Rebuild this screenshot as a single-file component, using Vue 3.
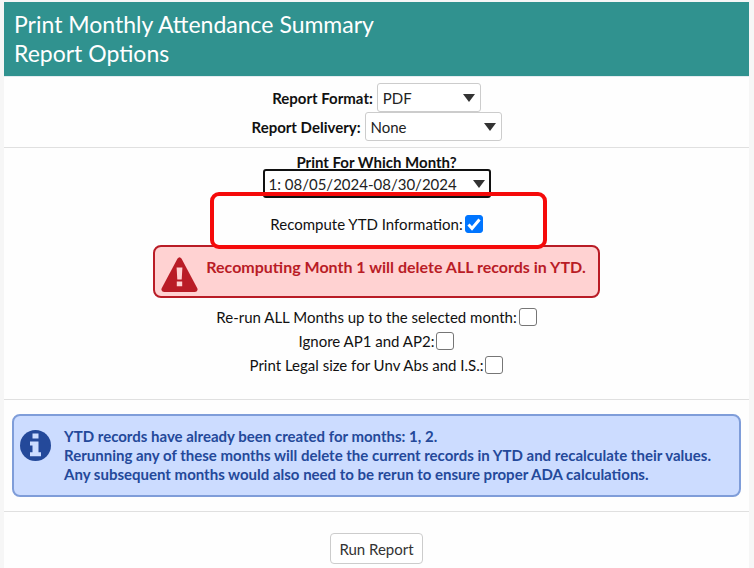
<script setup>
import { ref } from 'vue'

const format = ref('PDF')
const delivery = ref('None')
const month = ref('1: 08/05/2024-08/30/2024')
const recompute = ref(true)

const options = ref([
  { id: 'rerun', label: 'Re-run ALL Months up to the selected month:', checked: false },
  { id: 'ignore', label: 'Ignore AP1 and AP2:', checked: false },
  { id: 'legal', label: 'Print Legal size for Unv Abs and I.S.:', checked: false },
])
</script>

<template>
  <main class="panel">
    <header class="panel-header">
      <h1>Print Monthly Attendance Summary<br>Report Options</h1>
    </header>

    <section class="formats">
      <div class="field">
        <label for="format">Report Format:</label>
        <span class="select format">
          <select id="format" v-model="format">
            <option>PDF</option>
          </select>
        </span>
      </div>
      <div class="field">
        <label for="delivery">Report Delivery:</label>
        <span class="select delivery">
          <select id="delivery" v-model="delivery">
            <option>None</option>
          </select>
        </span>
      </div>
    </section>

    <section class="months">
      <label class="month-label" for="month">Print For Which Month?</label>
      <span class="select month">
        <select id="month" v-model="month">
          <option>1: 08/05/2024-08/30/2024</option>
        </select>
      </span>

      <div class="check recompute">
        <label for="recompute">Recompute YTD Information:</label>
        <input id="recompute" v-model="recompute" type="checkbox">
        <span class="highlight"></span>
      </div>

      <div class="alert danger">
        <svg class="icon-warning" viewBox="0 0 37 35" aria-hidden="true">
          <path fill="#b91c26" d="M16.4 1.8Q18.5-1.5 20.6 1.8L36.3 31.2Q37.4 34.5 34 35H3Q-.4 34.5.7 31.2Z" />
          <path fill="#ffd2d2" d="M15.6 10.5h5.8l-.7 12h-4.4zM15.8 24.5h5.4v4.7h-5.4z" />
        </svg>
        <p>Recomputing Month 1 will delete ALL records in YTD.</p>
      </div>

      <div class="checks">
        <div v-for="o in options" :key="o.id" class="check">
          <label :for="o.id">{{ o.label }}</label>
          <input :id="o.id" v-model="o.checked" type="checkbox">
        </div>
      </div>
    </section>

    <section class="notice">
      <div class="alert info">
        <svg class="icon-info" viewBox="0 0 31 31" aria-hidden="true">
          <circle cx="15.5" cy="15.5" r="15.5" fill="#24499a" />
          <path fill="#ccdcff" d="M12.5 3.500h6v5h-6zM10 11.500h8.500v10.700h2.500v4H10v-4h2.500v-6.700H10z" />
        </svg>
        <p>
          YTD records have already been created for months: 1, 2.<br>
          Rerunning any of these months will delete the current records in YTD and recalculate their values.<br>
          Any subsequent months would also need to be rerun to ensure proper ADA calculations.
        </p>
      </div>
    </section>

    <footer class="actions">
      <button type="button">Run Report</button>
    </footer>
  </main>
</template>

<style>
body{background:#f6f6f6}
</style>

<style scoped>
.panel{margin:2px 5px 0 4px;background:#fefefe;color:#111;font-family:Lato,"Liberation Sans",sans-serif;font-size:15px;line-height:20px}
.panel-header{background:#30928f;padding:8px 10px;border-bottom:1px solid #e4ecf0}
h1{margin:0;color:#fff;font-size:23px;line-height:29px;font-weight:400}
section{border-bottom:1px solid #e0e0e0}
.formats{padding:6px 0}
.field{display:flex;justify-content:center;align-items:center;gap:4px;font-weight:700}
.select{position:relative;display:block}
.select::after{content:"";position:absolute;right:6px;top:50%;margin-top:-4px;border:6px solid transparent;border-top:8px solid #333;border-bottom:0;pointer-events:none}
select{appearance:none;display:block;width:100%;height:29px;margin:0;padding:0 5px;border:1px solid #ccc;border-radius:3px;background:#fff;color:#222;font:inherit;font-weight:400}
.format{width:104px}
.delivery{width:137px}
.month{width:228px}
.month select{padding:0 4px;border:2px solid #111}
.months{display:flex;flex-direction:column;align-items:center;padding:4px 0 22px}
.month-label{height:17px;font-weight:700}
.check{display:flex;justify-content:center;align-items:center;gap:2px;height:24px}
.check input{appearance:none;width:18px;height:18px;margin:0;border:1px solid #767676;border-radius:3px;background:#fff}
.check input:checked{border-color:#0075ff;background:#0075ff url("data:image/svg+xml,%3Csvg xmlns='http://www.w3.org/2000/svg' viewBox='0 0 16 16'%3E%3Cpath d='M2.5 8.5l3.5 4 7.5-9' fill='none' stroke='white' stroke-width='3'/%3E%3C/svg%3E")}
.recompute{position:relative;margin:14px 0 9px}
/* red marker drawn over the neighbouring rows */
.highlight{position:absolute;inset:-20px -64px -13px -60px;border:4px solid #f50a0a;border-radius:9px;z-index:1;pointer-events:none}
.alert{display:flex;box-sizing:border-box;border:2px solid;border-radius:8px;font-weight:700}
.alert p{margin:0}
.alert svg{flex:none}
.danger{gap:8px;padding:10px 12px 4px 6px;border-color:#b91c26;background:#ffd2d2;color:#b91c26;font-size:16px}
.icon-warning{width:37px;height:35px}
.checks{margin-top:7px}
.notice{padding:14px 8px}
.info{gap:13px;padding:11px 6px;border-color:#7f9dd9;background:#ccdcff;color:#24499a;line-height:19px}
.icon-info{width:31px;height:31px;margin-top:3px}
.actions{display:flex;justify-content:center;padding:21px 0}
button{height:31px;padding:0 8px;border:1px solid #ccc;border-radius:4px;background:#fff;color:#333;font:inherit}
</style>
